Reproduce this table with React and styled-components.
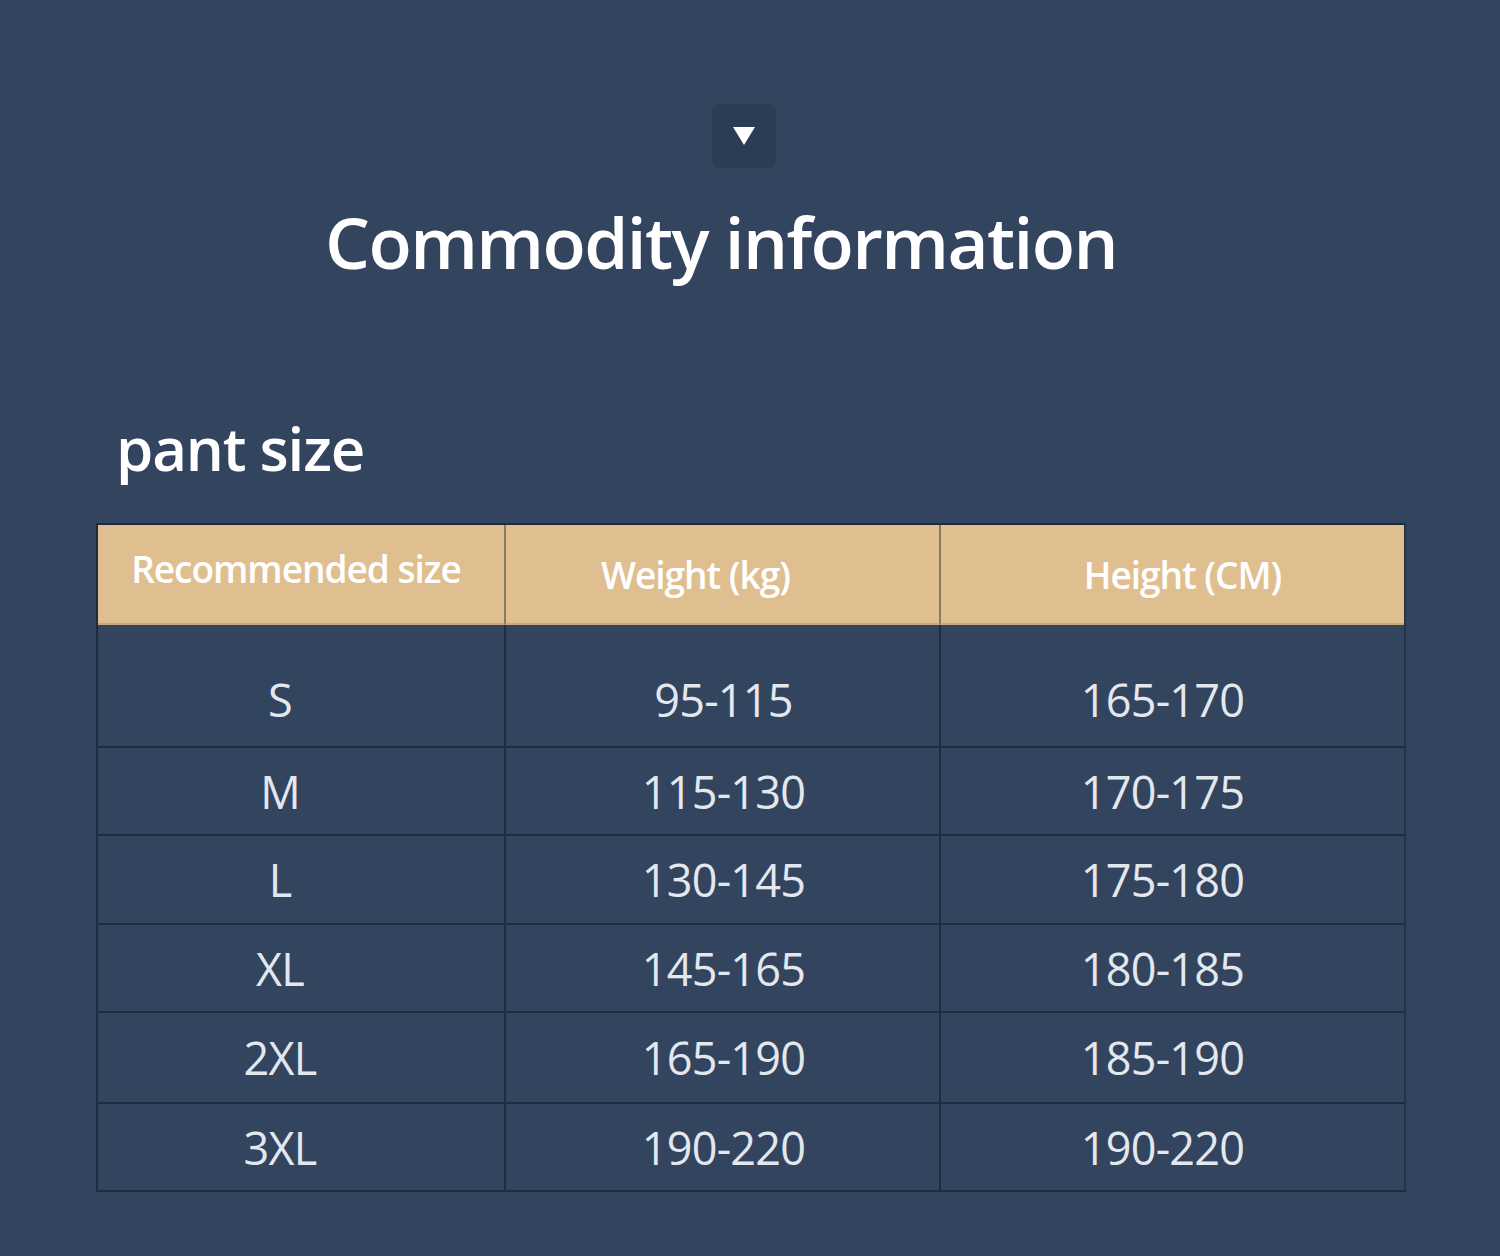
import React from "react";
import styled, { createGlobalStyle } from "styled-components";

const Global = createGlobalStyle`
  html, body { margin: 0; padding: 0; background: #33445f; }
  body { font-family: "Open Sans", "Noto Sans", sans-serif; }
`;

const Page = styled.div`
  width: 1500px;
  height: 1256px;
  background: #33445f;
  display: flex;
  flex-direction: column;
  align-items: center;
  padding-top: 104px;
  box-sizing: border-box;
`;

const Toggle = styled.div`
  width: 64px;
  height: 64px;
  margin-left: -12px;
  border-radius: 9px;
  background: #2d3c55;
  display: flex;
  align-items: center;
  justify-content: center;
`;

const Title = styled.h1`
  margin: 18px 0 0 0;
  padding-right: 58px;
  font-size: 71px;
  font-weight: 600;
  letter-spacing: -1.6px;
  color: #ffffff;
  line-height: 1;
  height: 110px;
  display: flex;
  align-items: center;
`;

const Section = styled.div`
  align-self: stretch;
  padding: 0 94px 0 96px;
  margin-top: 122px;
  display: flex;
  flex-direction: column;
`;

const Subtitle = styled.h2`
  margin: 0 0 0 20px;
  font-size: 60px;
  font-weight: 600;
  letter-spacing: -1.2px;
  color: #ffffff;
  line-height: 1;
  height: 82px;
`;

const Table = styled.div`
  margin-top: 23px;
  display: grid;
  grid-template-columns: 406px 435px 465px;
  grid-template-rows: 100px 121px 88px 89px 88px 91px 88px;
  border: 2px solid #1f2b3e;
  border-right-color: #26344a;
  box-sizing: border-box;
  width: 1310px;
`;

const HeadCell = styled.div`
  background: #dfbf90;
  color: #ffffff;
  font-size: 37px;
  font-weight: 600;
  letter-spacing: -1px;
  display: flex;
  align-items: center;
  justify-content: center;
  padding-left: ${(p) => Math.max(0, p.$shift * 2)}px;
  padding-right: ${(p) => Math.max(0, -p.$shift * 2)}px;
  padding-bottom: ${(p) => p.$lift || 0}px;
  border-left: ${(p) => (p.$first ? "none" : "2px solid #8a7a62")};
  border-bottom: 2px solid #c8a97c;
  box-sizing: border-box;
`;

const Cell = styled.div`
  color: #e3e7ee;
  font-size: 45px;
  font-weight: 400;
  letter-spacing: -0.8px;
  display: flex;
  align-items: ${(p) => (p.$tall ? "flex-end" : "center")};
  justify-content: center;
  padding-left: ${(p) => Math.max(0, p.$shift * 2)}px;
  padding-right: ${(p) => Math.max(0, -p.$shift * 2)}px;
  padding-bottom: ${(p) => (p.$tall ? 16 : 0)}px;
  border-left: ${(p) => (p.$first ? "none" : "2px solid #1f2b3e")};
  border-top: ${(p) => (p.$top ? "2px solid #1f2b3e" : "none")};
  box-sizing: border-box;
`;

const headers = [
  { t: "Recommended size", shift: -5, lift: 12 },
  { t: "Weight (kg)", shift: -27, lift: 0 },
  { t: "Height (CM)", shift: 10, lift: 0 },
];

const rows = [
  ["S", "95-115", "165-170"],
  ["M", "115-130", "170-175"],
  ["L", "130-145", "175-180"],
  ["XL", "145-165", "180-185"],
  ["2XL", "165-190", "185-190"],
  ["3XL", "190-220", "190-220"],
];

const shifts = [-21, 1, -10];

export default function App() {
  return (
    <>
      <Global />
      <Page>
        <Toggle>
          <svg width="24" height="20" viewBox="0 0 24 20">
            <path d="M1 1 H23 L12 19 Z" fill="#ffffff" />
          </svg>
        </Toggle>
        <Title>Commodity information</Title>
        <Section>
          <Subtitle>pant size</Subtitle>
          <Table>
            {headers.map((h, i) => (
              <HeadCell key={h.t} $first={i === 0} $shift={h.shift} $lift={h.lift}>
                {h.t}
              </HeadCell>
            ))}
            {rows.map((r, ri) =>
              r.map((v, ci) => (
                <Cell
                  key={ri + "-" + ci}
                  $first={ci === 0}
                  $top={ri > 0}
                  $tall={ri === 0}
                  $shift={shifts[ci]}
                >
                  {v}
                </Cell>
              ))
            )}
          </Table>
        </Section>
      </Page>
    </>
  );
}
